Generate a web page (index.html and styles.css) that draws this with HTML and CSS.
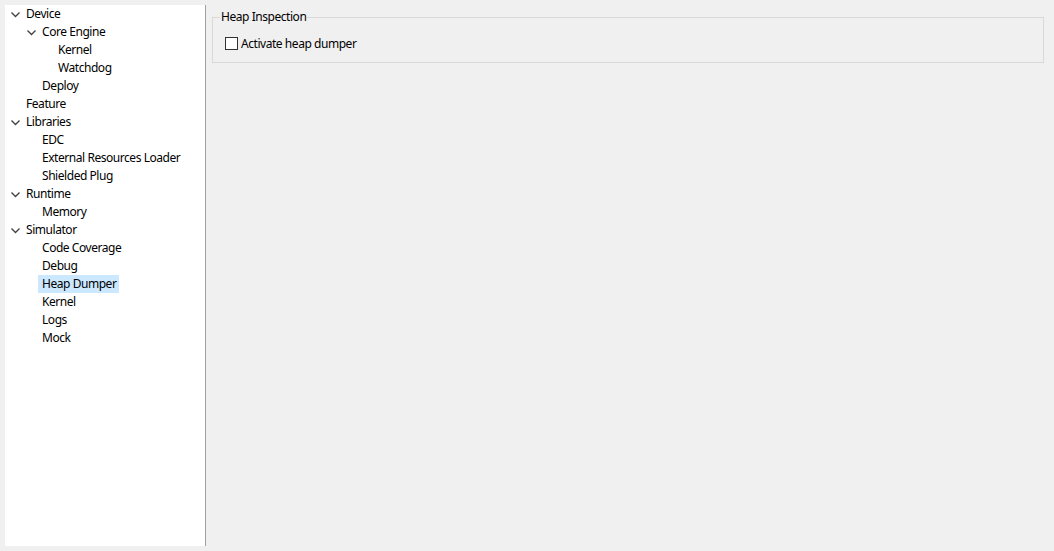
FILE: index.html
```html
<!DOCTYPE html>
<html>
<head>
<meta charset="utf-8">
<link rel="stylesheet" href="styles.css">
</head>
<body>
<div class="window">
  <nav class="tree">
    <div class="row lvl0"><span class="twisty"><svg viewBox="0 0 12 18" width="12" height="18"><path d="M1.5 7.5 L5.5 11.5 L9.5 7.5" /></svg></span><span class="label">Device</span></div>
    <div class="row lvl1"><span class="twisty"><svg viewBox="0 0 12 18" width="12" height="18"><path d="M1.5 7.5 L5.5 11.5 L9.5 7.5" /></svg></span><span class="label">Core Engine</span></div>
    <div class="row lvl2"><span class="twisty"></span><span class="label">Kernel</span></div>
    <div class="row lvl2"><span class="twisty"></span><span class="label">Watchdog</span></div>
    <div class="row lvl1"><span class="twisty"></span><span class="label">Deploy</span></div>
    <div class="row lvl0"><span class="twisty"></span><span class="label">Feature</span></div>
    <div class="row lvl0"><span class="twisty"><svg viewBox="0 0 12 18" width="12" height="18"><path d="M1.5 7.5 L5.5 11.5 L9.5 7.5" /></svg></span><span class="label">Libraries</span></div>
    <div class="row lvl1"><span class="twisty"></span><span class="label">EDC</span></div>
    <div class="row lvl1"><span class="twisty"></span><span class="label">External Resources Loader</span></div>
    <div class="row lvl1"><span class="twisty"></span><span class="label">Shielded Plug</span></div>
    <div class="row lvl0"><span class="twisty"><svg viewBox="0 0 12 18" width="12" height="18"><path d="M1.5 7.5 L5.5 11.5 L9.5 7.5" /></svg></span><span class="label">Runtime</span></div>
    <div class="row lvl1"><span class="twisty"></span><span class="label">Memory</span></div>
    <div class="row lvl0"><span class="twisty"><svg viewBox="0 0 12 18" width="12" height="18"><path d="M1.5 7.5 L5.5 11.5 L9.5 7.5" /></svg></span><span class="label">Simulator</span></div>
    <div class="row lvl1"><span class="twisty"></span><span class="label">Code Coverage</span></div>
    <div class="row lvl1"><span class="twisty"></span><span class="label">Debug</span></div>
    <div class="row lvl1"><span class="twisty"></span><span class="label selected">Heap Dumper</span></div>
    <div class="row lvl1"><span class="twisty"></span><span class="label">Kernel</span></div>
    <div class="row lvl1"><span class="twisty"></span><span class="label">Logs</span></div>
    <div class="row lvl1"><span class="twisty"></span><span class="label">Mock</span></div>
  </nav>
  <main class="content">
    <fieldset class="group">
      <legend class="group-title">Heap Inspection</legend>
      <label class="check"><span class="box"></span><span class="check-text">Activate heap dumper</span></label>
    </fieldset>
  </main>
</div>
</body>
</html>
```

FILE: styles.css
```css
* { box-sizing: border-box; }
html, body {
  margin: 0;
  padding: 0;
  height: 100%;
  background: #f0f0f0;
  font-family: "Noto Sans", "DejaVu Sans", sans-serif;
  font-size: 12px;
  letter-spacing: -0.45px;
  color: #000;
}
.window {
  display: flex;
  height: 100%;
  padding: 5px 0 5px 5px;
}
.tree {
  width: 201px;
  background: #fff;
  border-right: 1px solid #a0a0a0;
  flex: none;
}
.row {
  display: flex;
  height: 18px;
  line-height: 18px;
  white-space: nowrap;
}
.lvl0 { padding-left: 5px; }
.lvl1 { padding-left: 21px; }
.lvl2 { padding-left: 37px; }
.twisty {
  width: 12px;
  height: 18px;
  flex: none;
}
.twisty svg { display: block; }
.twisty path {
  fill: none;
  stroke: #404040;
  stroke-width: 1.3;
}
.label {
  padding: 0 3px 0 4px;
  height: 18px;
}
.label.selected { background: #cce8ff; }
.content {
  flex: 1;
  padding: 3px 10px 0 6px;
}
.group {
  margin: 0;
  border: 1px solid #d9d9d9;
  padding: 8px 12px 10px 12px;
  min-width: 0;
}
.group-title {
  padding: 0 1px 0 1px;
  margin-left: -5px;
  line-height: 18px;
  height: 18px;
}
.check {
  display: flex;
  align-items: center;
  height: 18px;
}
.box {
  width: 13px;
  height: 13px;
  border: 1px solid #333;
  background: #fff;
  flex: none;
  margin-right: 3px;
}
```
